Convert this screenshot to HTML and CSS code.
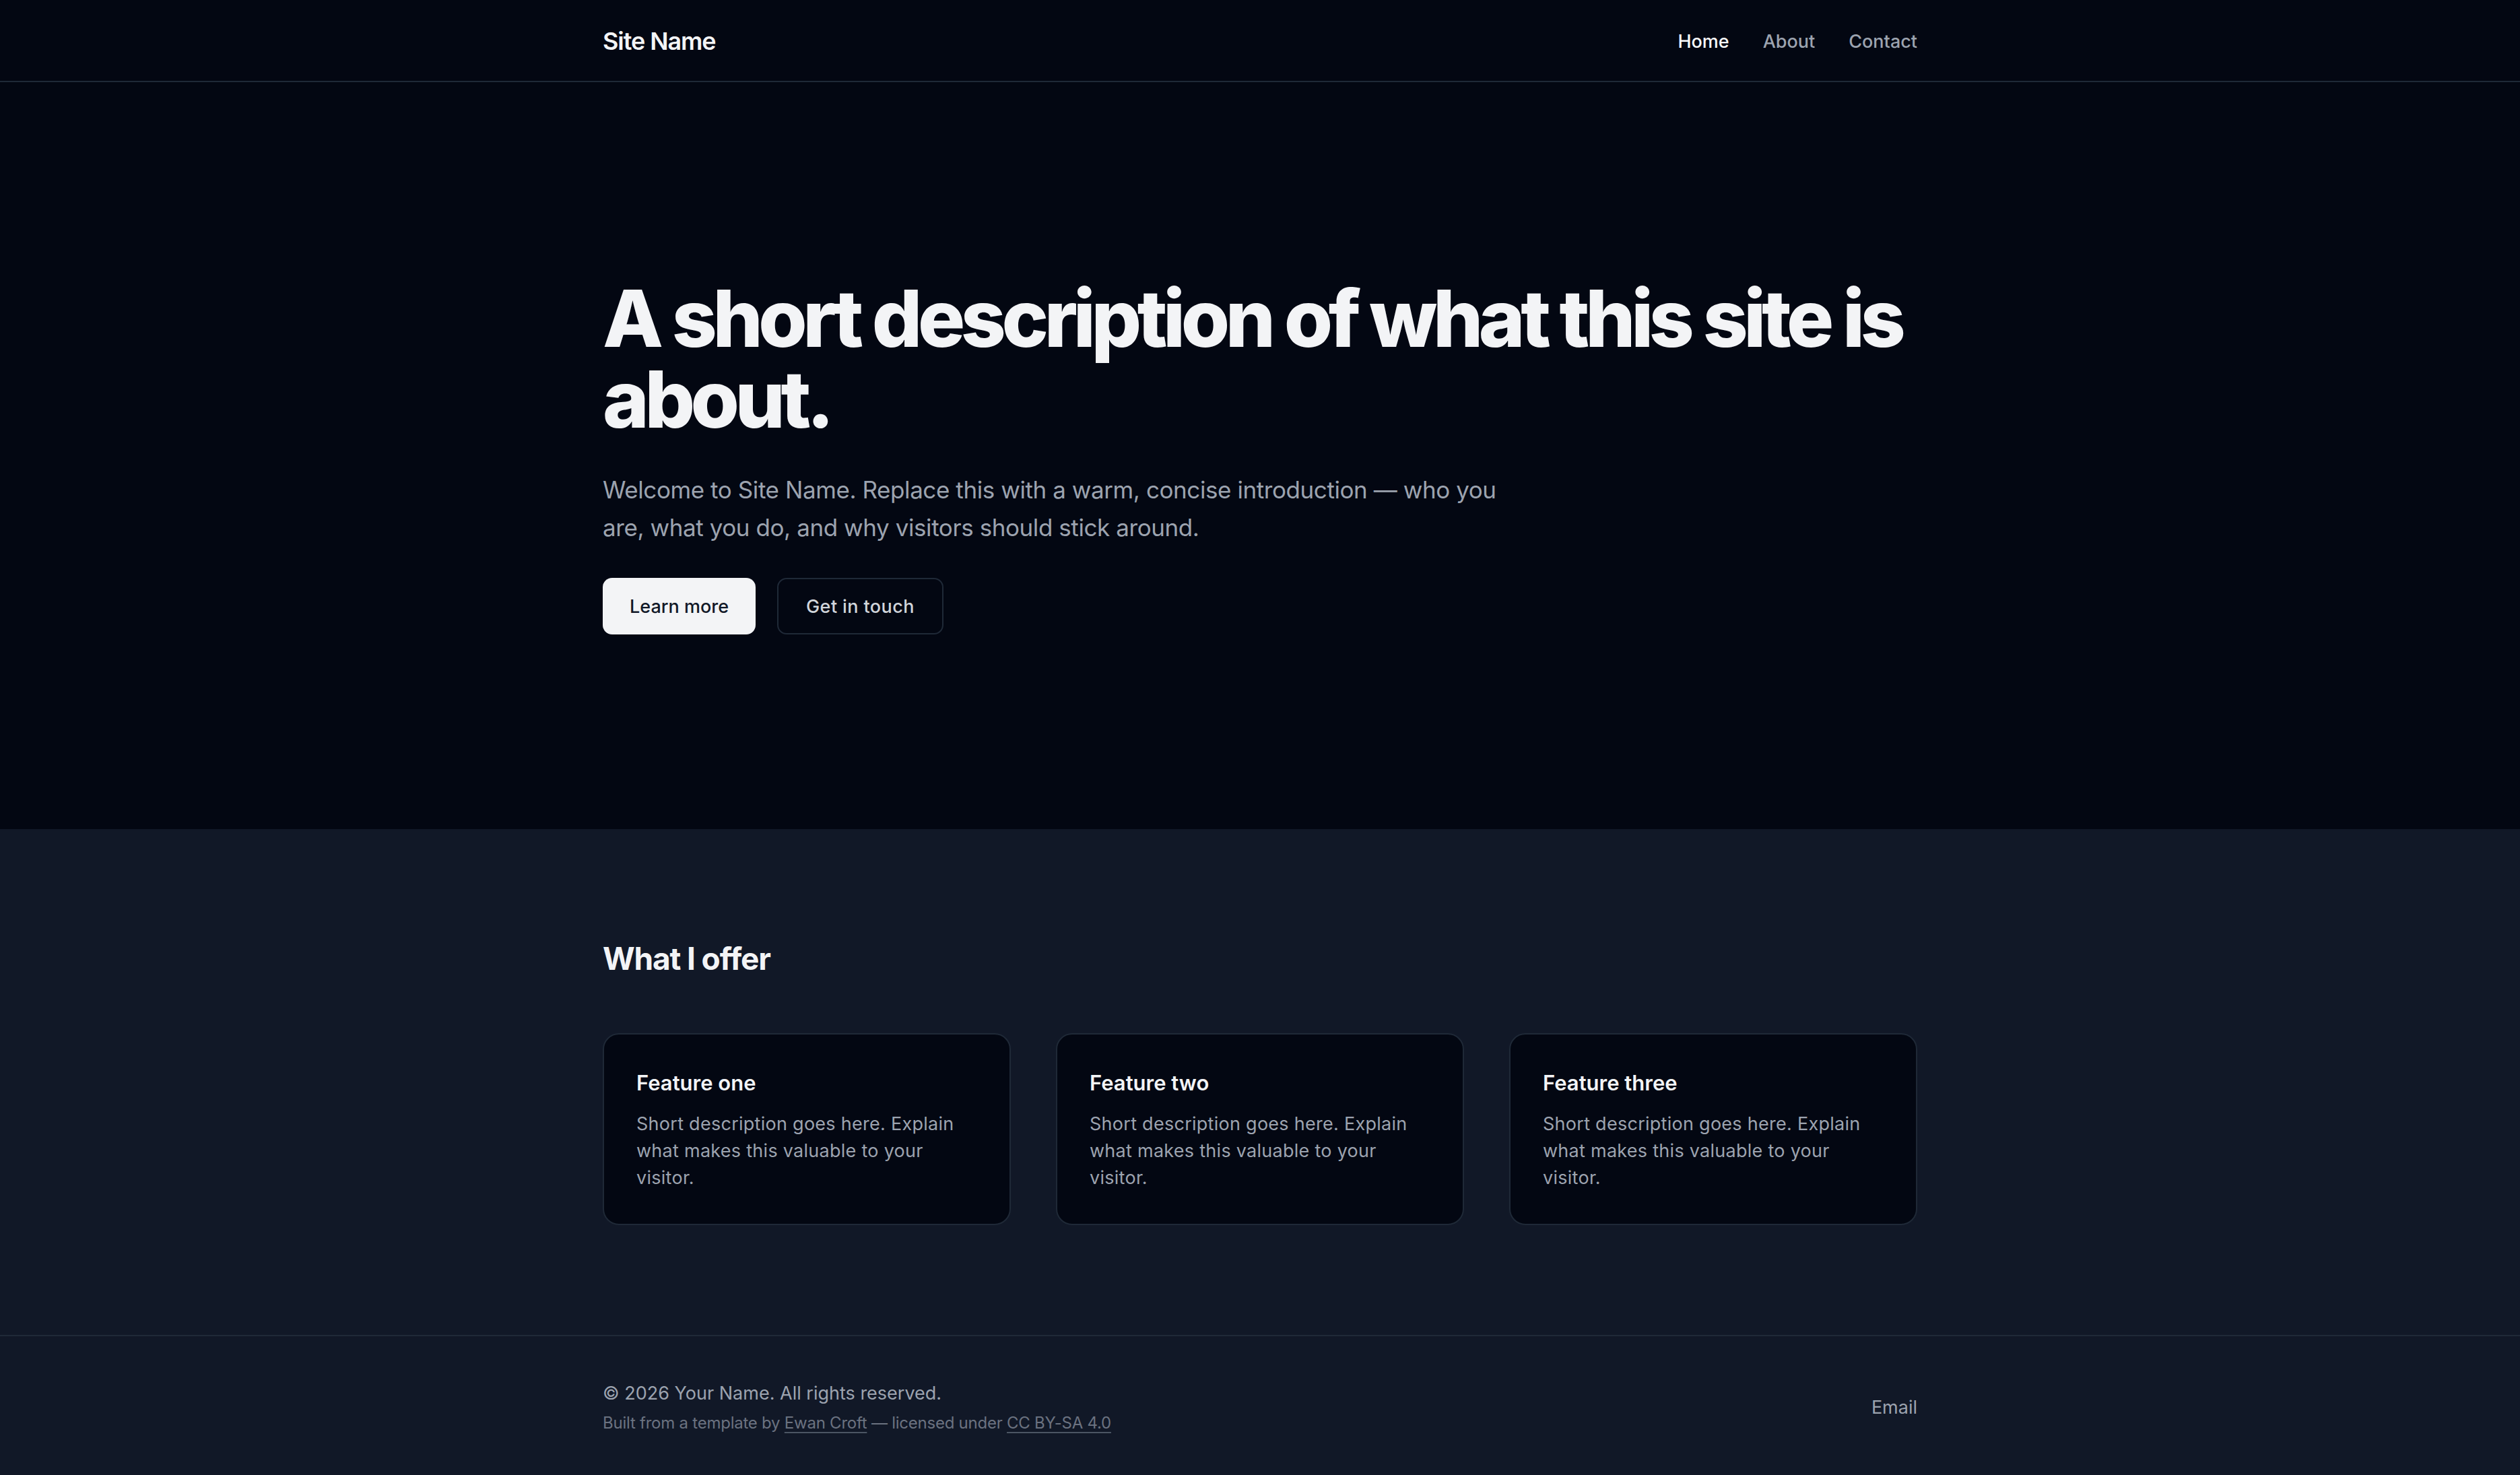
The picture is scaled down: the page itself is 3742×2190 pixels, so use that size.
FILE: index.html
```html
<!DOCTYPE html>
<html lang="en">
<head>
<meta charset="utf-8">
<title>Site Name</title>
<link rel="stylesheet" href="styles.css">
</head>
<body>
<header class="site-header">
  <div class="container header-inner">
    <a class="brand" href="#">Site Name</a>
    <nav class="nav">
      <a class="nav-link active" href="#">Home</a>
      <a class="nav-link" href="#">About</a>
      <a class="nav-link" href="#">Contact</a>
    </nav>
  </div>
</header>
<main>
  <section class="hero">
    <div class="container">
      <h1 class="hero-title">A short description of what this site is about.</h1>
      <p class="hero-lead">Welcome to Site Name. Replace this with a warm, concise introduction — who you are, what you do, and why visitors should stick around.</p>
      <div class="hero-actions">
        <a class="btn btn-primary" href="#">Learn more</a>
        <a class="btn btn-ghost" href="#">Get in touch</a>
      </div>
    </div>
  </section>
  <section class="features">
    <div class="container">
      <h2 class="section-title">What I offer</h2>
      <div class="feature-grid">
        <article class="card">
          <h3 class="card-title">Feature one</h3>
          <p class="card-text">Short description goes here. Explain what makes this valuable to your visitor.</p>
        </article>
        <article class="card">
          <h3 class="card-title">Feature two</h3>
          <p class="card-text">Short description goes here. Explain what makes this valuable to your visitor.</p>
        </article>
        <article class="card">
          <h3 class="card-title">Feature three</h3>
          <p class="card-text">Short description goes here. Explain what makes this valuable to your visitor.</p>
        </article>
      </div>
    </div>
  </section>
</main>
<footer class="site-footer">
  <div class="container footer-inner">
    <div class="footer-meta">
      <p class="copyright">© 2026 Your Name. All rights reserved.</p>
      <p class="credit">Built from a template by <a href="#">Ewan Croft</a> — licensed under <a href="#">CC BY-SA 4.0</a></p>
    </div>
    <a class="footer-link" href="#">Email</a>
  </div>
</footer>
</body>
</html>
```
FILE: styles.css
```css
* {
  box-sizing: border-box;
}

html,
body {
  margin: 0;
  padding: 0;
}

body {
  background: #111827;
  color: #f3f4f6;
  font-family: Inter, "Noto Sans", "Liberation Sans", sans-serif;
  -webkit-font-smoothing: antialiased;
}

a {
  color: inherit;
  text-decoration: none;
}

p,
h1,
h2,
h3 {
  margin: 0;
}

.container {
  width: 1952px;
  margin: 0 auto;
}

/* Header */
.site-header {
  background: #030712;
  border-bottom: 2px solid #1f2937;
}

.header-inner {
  height: 120px;
  display: flex;
  align-items: center;
  justify-content: space-between;
}

.brand {
  margin-top: 2px;
  font-size: 36px;
  font-weight: 600;
  letter-spacing: -0.03em;
  color: #f3f4f6;
}

.nav {
  display: flex;
  gap: 50px;
  margin-top: 2px;
}

.nav-link {
  font-size: 27px;
  font-weight: 500;
  color: #9ca3af;
}

.nav-link.active {
  color: #f9fafb;
}

/* Hero */
.hero {
  background: #030712;
  padding: 291px 0 289px;
}

.hero-title {
  font-size: 117px;
  line-height: 120px;
  font-weight: 800;
  letter-spacing: -0.055em;
  color: #f3f4f6;
}

.hero-lead {
  margin-top: 46px;
  max-width: 1344px;
  font-size: 35px;
  line-height: 56px;
  letter-spacing: -0.012em;
  color: #9ca3af;
}

.hero-actions {
  margin-top: 47px;
  display: flex;
  gap: 32px;
}

.btn {
  height: 84px;
  padding: 0 40px;
  display: inline-flex;
  align-items: center;
  border-radius: 14px;
  font-size: 27px;
  font-weight: 500;
}

.btn-primary {
  background: #f3f4f6;
  color: #111827;
}

.btn-ghost {
  border: 2px solid #1f2937;
  padding: 0 41px;
  color: #d1d5db;
  letter-spacing: 0.015em;
}

/* Features */
.features {
  background: #111827;
  padding: 163px 0 163px;
}

.section-title {
  font-size: 46px;
  line-height: 58px;
  font-weight: 700;
  letter-spacing: -0.025em;
  color: #f3f4f6;
}

.feature-grid {
  margin-top: 82px;
  display: grid;
  grid-template-columns: repeat(3, 1fr);
  gap: 67px;
}

.card {
  background: #030712;
  border: 2px solid #1f2937;
  border-radius: 24px;
  padding: 48px 48px 48px;
}

.card-title {
  font-size: 31px;
  line-height: 48px;
  font-weight: 600;
  color: #f3f4f6;
}

.card-text {
  margin-top: 17px;
  font-size: 27px;
  line-height: 40px;
  letter-spacing: 0.01em;
  color: #9ca3af;
}

/* Footer */
.site-footer {
  background: #111827;
  border-top: 2px solid #1f2937;
}

.footer-inner {
  padding: 65px 0 64px;
  display: flex;
  align-items: center;
  justify-content: space-between;
}

.copyright {
  font-size: 27px;
  line-height: 40px;
  color: #9ca3af;
}

.credit {
  margin-top: 7px;
  font-size: 24px;
  line-height: 34px;
  letter-spacing: -0.01em;
  color: #6b7280;
}

.credit a {
  text-decoration: underline;
  text-decoration-color: #4b5563;
  text-underline-offset: 5px;
}

.footer-link {
  font-size: 27px;
  color: #9ca3af;
}
```
